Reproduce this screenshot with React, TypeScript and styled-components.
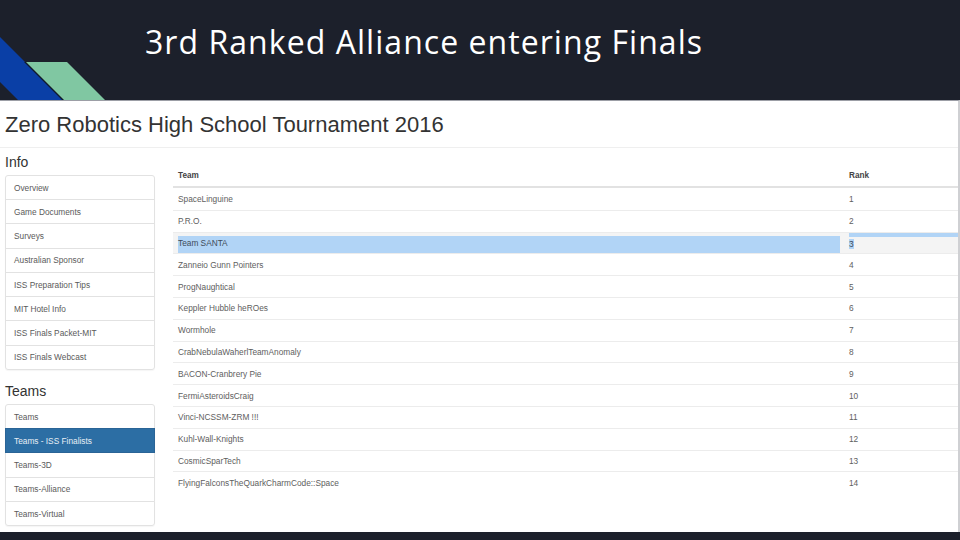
import React from "react";
import styled, { createGlobalStyle } from "styled-components";

const Global = createGlobalStyle`
  html, body { margin: 0; padding: 0; background: #1c202b; }
  #root { width: 960px; height: 540px; overflow: hidden; }
`;

const Slide = styled.div`
  width: 960px;
  height: 540px;
  background: #1c202b;
  display: flex;
  flex-direction: column;
`;

const Header = styled.header`
  height: 100px;
  flex: none;
  display: flex;
  align-items: flex-start;
`;

const Logo = styled.svg`
  width: 145px;
  height: 100px;
  flex: none;
  display: block;
`;

const SlideTitle = styled.h1`
  margin: 22.4px 0 0 0;
  font-family: "Open Sans", "Liberation Sans", sans-serif;
  font-weight: 400;
  font-size: 32px;
  letter-spacing: 1.05px;
  line-height: 40px;
  color: #ffffff;
  white-space: nowrap;
`;

const Shot = styled.div`
  flex: none;
  height: 432px;
  background: #ffffff;
  border-top: 1px solid #9c9ea6;
  border-right: 2px solid #cfd0d3;
  box-sizing: border-box;
  display: flex;
  flex-direction: column;
  font-family: "Liberation Sans", Arial, sans-serif;
`;

const PageTitle = styled.div`
  height: 47px;
  box-sizing: border-box;
  padding: 11px 0 0 5px;
  border-bottom: 1px solid #efefef;
  font-size: 22px;
  line-height: 26px;
  color: #333333;
  flex: none;
`;

const Body = styled.div`
  display: grid;
  grid-template-columns: 150px 1fr;
  column-gap: 18px;
  padding-left: 5px;
`;

const Sidebar = styled.nav`
  display: flex;
  flex-direction: column;
`;

const SectionHeading = styled.h3<{ $top: number }>`
  margin: ${(p) => p.$top}px 0 4.7px 0;
  font-size: 14px;
  line-height: 16px;
  font-weight: 400;
  color: #333333;
`;

const ListGroup = styled.div`
  display: flex;
  flex-direction: column;
  border-radius: 3px;
  box-shadow: 0 1px 1px rgba(0, 0, 0, 0.04);
`;

const ListItem = styled.div<{ $active?: boolean }>`
  height: 25.25px;
  box-sizing: border-box;
  margin-bottom: -1px;
  padding-left: 8px;
  display: flex;
  align-items: center;
  font-size: 8.3px;
  border: 1px solid ${(p) => (p.$active ? "#2a6496" : "#e2e2e2")};
  background: ${(p) => (p.$active ? "#2c6ea4" : "#ffffff")};
  color: ${(p) => (p.$active ? "#e8eef5" : "#5a5a5a")};
  position: relative;
  z-index: ${(p) => (p.$active ? 1 : 0)};
  &:first-child { border-radius: 3px 3px 0 0; }
  &:last-child { border-radius: 0 0 3px 3px; margin-bottom: 0; }
`;

const Table = styled.div`
  margin-top: 17px;
  display: flex;
  flex-direction: column;
`;

const Row = styled.div<{ $selected?: boolean; $first?: boolean }>`
  display: grid;
  grid-template-columns: 1fr 115px;
  height: 21.8px;
  box-sizing: border-box;
  border-top: 1px solid ${(p) => (p.$first ? "transparent" : "#ececec")};
  background: ${(p) => (p.$selected ? "#f4f4f4" : "transparent")};
  font-size: 8.3px;
  color: #5e5e5e;
`;

const HeadRow = styled.div`
  display: grid;
  grid-template-columns: 1fr 115px;
  height: 23px;
  box-sizing: border-box;
  border-bottom: 2px solid #e2e2e2;
  font-size: 8.2px;
  font-weight: 700;
  color: #444444;
`;

const Cell = styled.div<{ $rank?: boolean }>`
  display: flex;
  align-items: center;
  padding-left: ${(p) => (p.$rank ? 6 : 5)}px;
  white-space: nowrap;
`;

const SelectedTeamCell = styled.div`
  display: flex;
  align-items: flex-end;
  padding-left: 5px;
  padding-right: 3px;
`;

const Highlight = styled.span`
  display: flex;
  align-items: center;
  width: 100%;
  height: 17px;
  padding-bottom: 4px;
  box-sizing: border-box;
  background: #b1d4f6;
  color: #3e4a58;
`;

const SelectedRankCell = styled.div`
  display: flex;
  flex-direction: column;
  padding-left: 6px;
`;

const SelBar = styled.div`
  height: 4px;
  background: #b1d4f6;
  flex: none;
`;

const RankText = styled.div`
  flex: 1;
  display: flex;
  align-items: center;
  padding-bottom: 2px;
`;

const GlyphSel = styled.span`
  background: #b1d4f6;
  color: #3e4a58;
  line-height: 10px;
`;

const BottomBar = styled.div`
  flex: 1;
  background: #1c202b;
`;

const infoItems = [
  "Overview",
  "Game Documents",
  "Surveys",
  "Australian Sponsor",
  "ISS Preparation Tips",
  "MIT Hotel Info",
  "ISS Finals Packet-MIT",
  "ISS Finals Webcast",
];

const teamItems = ["Teams", "Teams - ISS Finalists", "Teams-3D", "Teams-Alliance", "Teams-Virtual"];

const teams = [
  "SpaceLinguine",
  "P.R.O.",
  "Team SANTA",
  "Zanneio Gunn Pointers",
  "ProgNaughtical",
  "Keppler Hubble heROes",
  "Wormhole",
  "CrabNebulaWaherlTeamAnomaly",
  "BACON-Cranbrery Pie",
  "FermiAsteroidsCraig",
  "Vinci-NCSSM-ZRM !!!",
  "Kuhl-Wall-Knights",
  "CosmicSparTech",
  "FlyingFalconsTheQuarkCharmCode::Space",
];

export default function App() {
  return (
    <>
      <Global />
      <Slide>
        <Header>
          <Logo viewBox="0 0 145 100">
            <polygon points="0,37 63,100 18,100 0,82" fill="#0a3fa6" />
            <polygon points="24,62 27,62 65,100 62,100" fill="#10141c" opacity="0.8" />
            <polygon points="26,62 67,62 105,100 64,100" fill="#80c7a2" />
          </Logo>
          <SlideTitle>3rd Ranked Alliance entering Finals</SlideTitle>
        </Header>
        <Shot>
          <PageTitle>Zero Robotics High School Tournament 2016</PageTitle>
          <Body>
            <Sidebar>
              <SectionHeading $top={6.3}>Info</SectionHeading>
              <ListGroup>
                {infoItems.map((t) => (
                  <ListItem key={t}>{t}</ListItem>
                ))}
              </ListGroup>
              <SectionHeading $top={13.3}>Teams</SectionHeading>
              <ListGroup>
                {teamItems.map((t) => (
                  <ListItem key={t} $active={t === "Teams - ISS Finalists"}>
                    {t}
                  </ListItem>
                ))}
              </ListGroup>
            </Sidebar>
            <Table>
              <HeadRow>
                <Cell>Team</Cell>
                <Cell $rank>Rank</Cell>
              </HeadRow>
              {teams.map((t, i) =>
                i === 2 ? (
                  <Row key={t} $selected>
                    <SelectedTeamCell>
                      <Highlight>{t}</Highlight>
                    </SelectedTeamCell>
                    <SelectedRankCell>
                      <SelBar />
                      <RankText>
                        <GlyphSel>{i + 1}</GlyphSel>
                      </RankText>
                    </SelectedRankCell>
                  </Row>
                ) : (
                  <Row key={t} $first={i === 0}>
                    <Cell>{t}</Cell>
                    <Cell $rank>{i + 1}</Cell>
                  </Row>
                )
              )}
            </Table>
          </Body>
        </Shot>
        <BottomBar />
      </Slide>
    </>
  );
}
